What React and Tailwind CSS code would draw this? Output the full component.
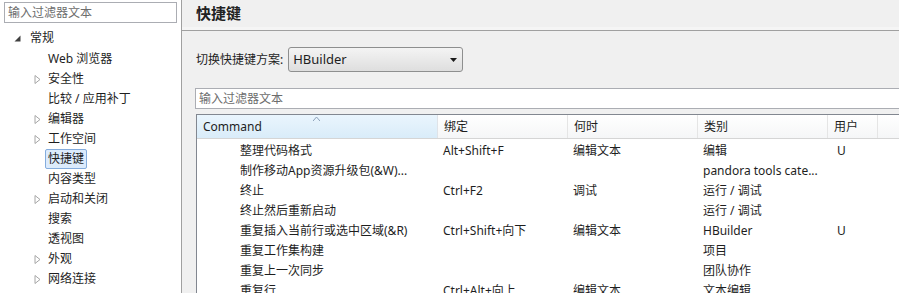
import React from 'react';

const tree = [
  { label: 'Web 浏览器', twisty: false },
  { label: '安全性', twisty: true },
  { label: '比较 / 应用补丁', twisty: false },
  { label: '编辑器', twisty: true },
  { label: '工作空间', twisty: true },
  { label: '快捷键', twisty: false, selected: true },
  { label: '内容类型', twisty: false },
  { label: '启动和关闭', twisty: true },
  { label: '搜索', twisty: false },
  { label: '透视图', twisty: false },
  { label: '外观', twisty: true },
  { label: '网络连接', twisty: true },
];

const rows = [
  ['整理代码格式', 'Alt+Shift+F', '编辑文本', '编辑', 'U'],
  ['制作移动App资源升级包(&W)...', '', '', 'pandora tools cate...', ''],
  ['终止', 'Ctrl+F2', '调试', '运行 / 调试', ''],
  ['终止然后重新启动', '', '', '运行 / 调试', ''],
  ['重复插入当前行或选中区域(&R)', 'Ctrl+Shift+向下', '编辑文本', 'HBuilder', 'U'],
  ['重复工作集构建', '', '', '项目', ''],
  ['重复上一次同步', '', '', '团队协作', ''],
  ['重复行', 'Ctrl+Alt+向上', '编辑文本', '文本编辑', ''],
];

const Twisty = () => (
  <svg width="7" height="9" viewBox="0 0 7 9" className="shrink-0">
    <path d="M1 0.5 L6 4.5 L1 8.5 Z" fill="none" stroke="#a6a6a6" strokeWidth="1" />
  </svg>
);

const Expanded = () => (
  <svg width="7" height="7" viewBox="0 0 7 7" className="shrink-0">
    <path d="M6.5 0.5 L6.5 6.5 L0.5 6.5 Z" fill="#404040" />
  </svg>
);

const App = () => {
  return (
    <div className="w-[899px] h-[293px] flex overflow-hidden text-[12px] text-[#1e1e1e] font-['Noto_Sans','Noto_Sans_CJK_SC',sans-serif]">
      {/* Left: preference tree */}
      <div className="w-[182px] shrink-0 bg-white border-r border-[#a0a0a0] flex flex-col">
        <div className="mx-[4px] mt-[2px] h-[21px] border border-[#abadb3] px-[3px] flex items-center text-[#6d6d6d]">
          输入过滤器文本
        </div>
        <div className="mt-[5px] flex flex-col">
          <div className="h-[20px] flex items-center pl-[14px] gap-[9px]">
            <Expanded />
            <span>常规</span>
          </div>
          {tree.map((item) => (
            <div key={item.label} className="h-[20px] flex items-center pt-[2px]">
              <div className="w-[48px] flex justify-end pr-[7px]">{item.twisty && <Twisty />}</div>
              {item.selected ? (
                <span className="-ml-[3px] px-[2px] h-[20px] flex items-center rounded-[2px] border border-[#84acdd] bg-[#dcebfc]">
                  {item.label}
                </span>
              ) : (
                <span>{item.label}</span>
              )}
            </div>
          ))}
        </div>
      </div>

      {/* Right: keys page */}
      <div className="flex-1 bg-[#f0f0f0] flex flex-col min-w-0">
        <div className="h-[31px] shrink-0 border-b border-[#a0a0a0] flex items-center pl-[14px] pb-[3px] shadow-[inset_0_-3px_0_#f5f5f5]">
          <span className="text-[15px] font-bold text-[#222]">快捷键</span>
        </div>

        <div className="mt-[16px] ml-[14px] h-[25px] flex items-center gap-[5px]">
          <span>切换快捷键方案:</span>
          <div className="w-[175px] h-[25px] rounded-[3px] border border-[#8e8f8f] bg-gradient-to-b from-[#f4f4f4] to-[#dedede] flex items-center justify-between pl-[4px] pr-[5px]">
            <span className="text-[13px]">HBuilder</span>
            <svg width="7" height="4" viewBox="0 0 7 4">
              <path d="M0 0 L7 0 L3.5 4 Z" fill="#1a1a1a" />
            </svg>
          </div>
        </div>

        <div className="mt-[16px] ml-[13px] h-[21px] shrink-0 border border-r-0 border-[#abadb3] bg-white px-[3px] flex items-center text-[#6d6d6d]">
          输入过滤器文本
        </div>

        <div className="mt-[5px] ml-[14px] flex-1 border-t border-l border-[#828790] bg-white flex flex-col">
          <div className="h-[24px] shrink-0 flex border-b border-[#d5d5d5]">
            <div className="relative w-[241px] shrink-0 flex items-center pl-[6px] pt-[1px] border-r border-[#dfe3e8] bg-gradient-to-b from-[#eaf5fd] to-[#d9ecf9]">
              <span>Command</span>
              <svg width="7" height="4" viewBox="0 0 7 4" className="absolute left-[116px] top-[2px]">
                <path d="M0 4 L3.5 0 L7 4" fill="none" stroke="#8ca0b8" strokeWidth="1" />
              </svg>
            </div>
            {['绑定', '何时', '类别'].map((h) => (
              <div key={h} className="w-[130px] shrink-0 flex items-center pl-[6px] pt-[1px] border-r border-[#e5e5e5] bg-gradient-to-b from-white to-[#f5f6f7]">
                {h}
              </div>
            ))}
            <div className="w-[50px] shrink-0 flex items-center pl-[6px] pt-[1px] border-r border-[#e5e5e5] bg-gradient-to-b from-white to-[#f5f6f7]">
              用户
            </div>
            <div className="flex-1 bg-gradient-to-b from-white to-[#f5f6f7]" />
          </div>

          <div className="mt-[1px] flex flex-col">
            {rows.map((r) => (
              <div key={r[0]} className="h-[20px] shrink-0 flex items-center pt-[2px]">
                <div className="w-[241px] shrink-0 pl-[43px] whitespace-nowrap">{r[0]}</div>
                <div className="w-[130px] shrink-0 pl-[5px] whitespace-nowrap">{r[1]}</div>
                <div className="w-[130px] shrink-0 pl-[5px] whitespace-nowrap">{r[2]}</div>
                <div className="w-[130px] shrink-0 pl-[5px] whitespace-nowrap">{r[3]}</div>
                <div className="w-[50px] shrink-0 pl-[9px]">{r[4]}</div>
              </div>
            ))}
          </div>
        </div>
      </div>
    </div>
  );
};

export default App;
